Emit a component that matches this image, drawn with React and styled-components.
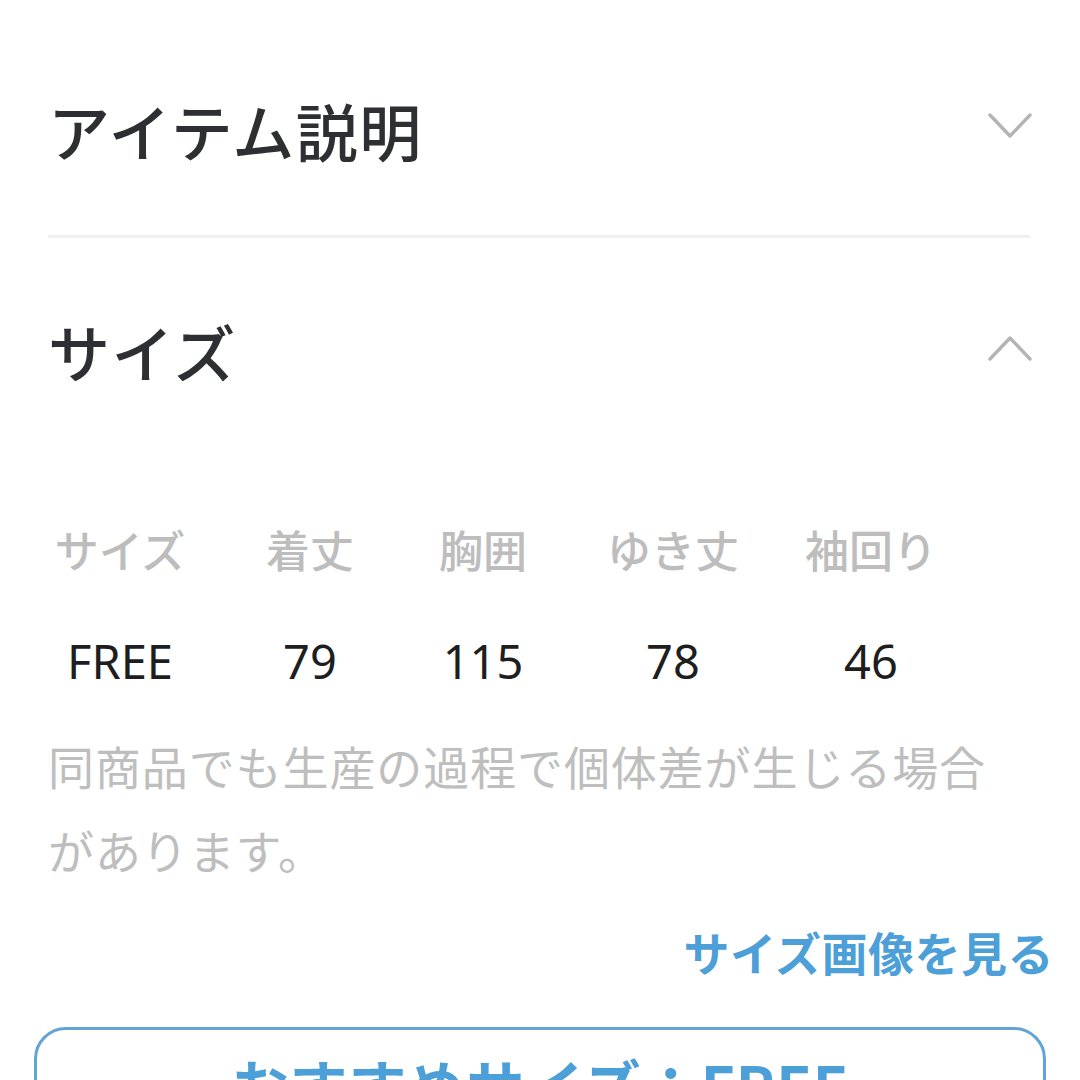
import styled, { createGlobalStyle } from 'styled-components';

const GlobalStyle = createGlobalStyle`
	html, body {
		margin: 0;
		padding: 0;
		background: #fff;
	}
	body {
		font-family: "Noto Sans CJK JP", "Noto Sans", sans-serif;
		overflow: hidden;
	}
`;

const Page = styled.div`
	width: 1080px;
	height: 1080px;
	overflow: hidden;
	box-sizing: border-box;
`;

const Section = styled.section`
	margin: 0 50px 0 48px;
	border-bottom: ${({ divided }) => (divided ? '3px solid #f0f0f0' : 'none')};
`;

const SectionHeader = styled.div`
	display: flex;
	align-items: center;
	justify-content: space-between;
	padding: ${({ pad }) => pad};
`;

const SectionTitle = styled.h2`
	margin: 0;
	font-size: 62px;
	line-height: 84px;
	font-weight: 500;
	color: #2e2f33;
	letter-spacing: 1.5px;
`;

const Chevron = styled.svg`
	width: 44px;
	height: 28px;
	margin: 0 -2px ${({ up }) => (up ? '6px' : '8px')} 0;
	flex-shrink: 0;
`;

const ChevronIcon = ({ up }) => (
	<Chevron up={up ? 1 : 0} viewBox="0 0 44 28">
		<polyline
			points={up ? '2,25 22,4 42,25' : '2,3 22,24 42,3'}
			fill="none"
			stroke="#b4b4b4"
			strokeWidth="3.4"
			strokeLinecap="round"
			strokeLinejoin="round"
		/>
	</Chevron>
);

const SizeTable = styled.div`
	display: grid;
	grid-template-columns: 144px 236px 110px 270px 126px;
	grid-auto-rows: 112px;
	margin-top: 100px;
`;

const HeadCell = styled.div`
	display: flex;
	align-items: center;
	justify-content: center;
	font-size: 44px;
	font-weight: 500;
	color: #bdbdbd;
	white-space: nowrap;
`;

const ValueCell = styled.div`
	display: flex;
	align-items: center;
	justify-content: center;
	font-family: "Noto Sans", "Open Sans", sans-serif;
	font-size: 47px;
	color: #1e1e1e;
	white-space: nowrap;
`;

const Note = styled.p`
	margin: 6px 0 0;
	max-width: 950px;
	font-size: 46px;
	line-height: 84px;
	letter-spacing: 0.9px;
	color: #bebebe;
	font-weight: 400;
`;

const LinkRow = styled.div`
	display: flex;
	justify-content: flex-end;
	margin: 28px -24px 0 0;
`;

const SizeLink = styled.a`
	font-size: 46px;
	line-height: 64px;
	font-weight: 700;
	letter-spacing: 0.5px;
	color: #4d9fd8;
	text-decoration: none;
	cursor: pointer;
`;

const RecommendButton = styled.button`
	display: block;
	box-sizing: border-box;
	width: 1012px;
	margin: 44px 0 0 34px;
	padding: 14px 0 20px;
	border: 3px solid #62a5d5;
	border-radius: 32px;
	background: #fff;
	font-family: "Noto Sans CJK JP", "Noto Sans", sans-serif;
	font-size: 58px;
	line-height: 81px;
	font-weight: 700;
	letter-spacing: 1px;
	color: #4d9fd8;
	cursor: pointer;
`;

const headers = ['サイズ', '着丈', '胸囲', 'ゆき丈', '袖回り'];
const values = ['FREE', '79', '115', '78', '46'];

export default function App() {
	return (
		<Page>
			<GlobalStyle />
			<Section divided>
				<SectionHeader pad="88px 0 63px">
					<SectionTitle>アイテム説明</SectionTitle>
					<ChevronIcon />
				</SectionHeader>
			</Section>
			<Section>
				<SectionHeader pad="71px 0 0">
					<SectionTitle>サイズ</SectionTitle>
					<ChevronIcon up />
				</SectionHeader>
				<SizeTable>
					{headers.map((h) => (
						<HeadCell key={h}>{h}</HeadCell>
					))}
					{values.map((v, i) => (
						<ValueCell key={i}>{v}</ValueCell>
					))}
				</SizeTable>
				<Note>同商品でも生産の過程で個体差が生じる場合があります。</Note>
				<LinkRow>
					<SizeLink>サイズ画像を見る</SizeLink>
				</LinkRow>
			</Section>
			<RecommendButton>おすすめサイズ：FREE</RecommendButton>
		</Page>
	);
}
